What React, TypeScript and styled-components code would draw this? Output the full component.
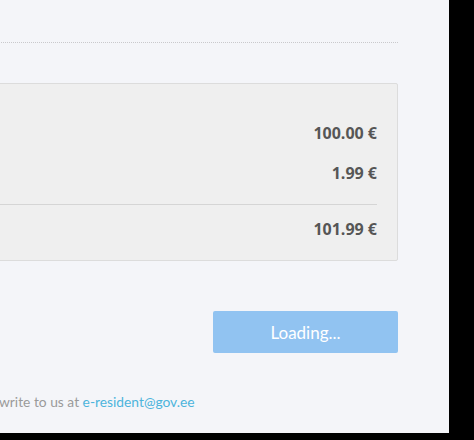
import styled, { createGlobalStyle } from "styled-components";

const GlobalStyle = createGlobalStyle`
  html, body {
    margin: 0;
    padding: 0;
    background: #000;
  }
  * {
    box-sizing: border-box;
  }
`;

const Viewport = styled.div`
  width: 449px;
  height: 433px;
  background: #f4f5f9;
  overflow: hidden;
  padding: 42px 51px 0 0;
`;

const Column = styled.div`
  width: 398px;
  display: flex;
  flex-direction: column;
`;

const DottedRule = styled.hr`
  margin: 0 0 0 -4px;
  border: 0;
  border-top: 1px dotted #c9c9cc;
  height: 0;
`;

const Summary = styled.div`
  margin: 40px 0 0 -4px;
  background: #efefef;
  border: 1px solid #dcdcdc;
  border-radius: 2px;
  padding: 39px 20px 21px 0;
  display: flex;
  flex-direction: column;
`;

const PriceRow = styled.div<{ $gap?: number }>`
  display: flex;
  justify-content: flex-end;
  margin-top: ${(p) => p.$gap ?? 0}px;
  font-family: "Open Sans", "Liberation Sans", sans-serif;
  font-weight: 700;
  font-size: 16px;
  line-height: 20px;
  color: #565656;
`;

const Divider = styled.div`
  height: 1px;
  background: #d5d5d5;
  margin: 21px 0 14px;
`;

const Actions = styled.div`
  display: flex;
  justify-content: flex-end;
  margin-top: 50px;
`;

const SubmitButton = styled.button`
  width: 185px;
  height: 42px;
  border: 0;
  border-radius: 2px;
  background: #91c3f1;
  color: #fff;
  font-family: Lato, "Liberation Sans", sans-serif;
  font-size: 17px;
  cursor: default;
`;

const Footer = styled.p`
  margin: 39px 0 0 -1px;
  font-family: Lato, "Liberation Sans", sans-serif;
  font-size: 13.8px;
  line-height: 20px;
  color: #9a9a9a;
  white-space: nowrap;
`;

const Mail = styled.a`
  color: #4cb4dc;
  text-decoration: none;
`;

export default function App() {
  return (
    <>
      <GlobalStyle />
      <Viewport>
        <Column>
          <DottedRule />
          <Summary>
            <PriceRow>100.00 €</PriceRow>
            <PriceRow $gap={20}>1.99 €</PriceRow>
            <Divider />
            <PriceRow>101.99 €</PriceRow>
          </Summary>
          <Actions>
            <SubmitButton disabled>Loading...</SubmitButton>
          </Actions>
          <Footer>
            write to us at <Mail href="mailto:e-resident@gov.ee">e-resident@gov.ee</Mail>
          </Footer>
        </Column>
      </Viewport>
    </>
  );
}
